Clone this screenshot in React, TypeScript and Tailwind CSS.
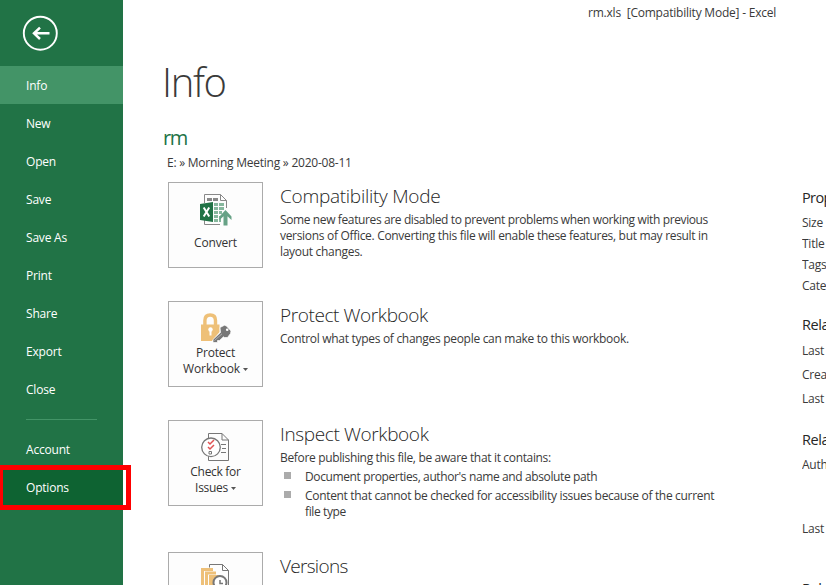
import type { ReactNode } from "react";

const navItems = ["Info", "New", "Open", "Save", "Save As", "Print", "Share", "Export", "Close"];

function NavItem({ label, className = "" }: { label: string; className?: string }) {
  return (
    <a className={`flex h-[38px] shrink-0 items-center pl-[26px] pt-px text-[12px] tracking-[-0.2px] text-white ${className}`}>
      {label}
    </a>
  );
}

function Sidebar() {
  return (
    <nav className="flex h-full w-[123px] shrink-0 flex-col bg-[#217346]">
      <div className="h-[66px] shrink-0 pl-[22px] pt-[15px]">
        <svg width="36" height="36" viewBox="0 0 36 36" fill="none" stroke="#fff">
          <circle cx="18.3" cy="18.200" r="16.5" strokeWidth="1.900" />
          <path d="M27.5 18.300H12M18 12.600L12 18.300L18 24" strokeWidth="2.500" />
        </svg>
      </div>
      {navItems.map((label) => (
        <NavItem key={label} label={label} className={label === "Info" ? "bg-[#439467]" : ""} />
      ))}
      <div className="ml-[26px] mt-[11px] mb-[10px] h-px w-[71px] shrink-0 bg-[#439467]" />
      <NavItem label="Account" className="tracking-[-0.1px]" />
      <NavItem label="Options" className="bg-[#0e6332]" />
    </nav>
  );
}

function Caret() {
  return (
    <svg className="ml-[3px] inline-block align-middle" width="5" height="3" viewBox="0 0 5 3">
      <path d="M0 0H5L2.5 3Z" fill="#555" />
    </svg>
  );
}

function ConvertIcon() {
  return (
    <svg width="33" height="32" viewBox="0 0 33 32" fill="none" className="ml-px">
      <path d="M4.5 9V.5H20.500L26.500 6.500V14M4.500 24V30.500H20" stroke="#888" />
      <path d="M20.500 .5V6.500H26.500" stroke="#888" />
      <path d="M7 4H12V7H7ZM13 4H18V7H13Z" fill="#888" />
      <path d="M14 9H18V12H14ZM19 9H24V12H19ZM14 13H18V16H14ZM19 13H24V16H19ZM14 17H18V20H14ZM19 17H22V20H19ZM14 21H18V24H14ZM14 25H18V28H14ZM19 22H21V28H19Z" fill="#86b79d" />
      <path d="M0 10L13 8V28L0 26Z" fill="#217346" />
      <path d="M3.700 13.500L9.200 22.500M9.200 13.500L3.700 22.500" stroke="#fff" strokeWidth="2" />
      <path d="M25.500 16L31.500 22.500V26L27.500 22.300V31.500H23.500V22.300L19.500 26V22.500Z" fill="#67a286" />
    </svg>
  );
}

function ProtectIcon() {
  return (
    <svg width="32" height="32" viewBox="0 0 32 32" fill="none">
      <path d="M4.900 13V7.500C4.900 4 7 2 10.200 2S15.500 4 15.500 7.500V13" stroke="#eec078" strokeWidth="3.400" />
      <path d="M1 11.500H19.500V19L12 28H1Z" fill="#eec078" />
      <circle cx="10.500" cy="16.500" r="2.200" fill="#fff" />
      <path d="M10.500 17V22.500" stroke="#fff" strokeWidth="2" />
      <path d="M20 14.500L24.500 12.200L26.500 13L31 18L30.500 20.500L27.500 24.500H24.500L23.500 23.800L19.500 27.500H17.500V29.500H13V26.500L20.500 19.500Z" fill="#777" stroke="#fff" strokeWidth=".7" />
      <circle cx="27.200" cy="16.800" r="1.300" fill="#fff" />
      <path d="M14.500 27.500L22 20.800" stroke="#ccc" strokeWidth=".7" />
    </svg>
  );
}

function InspectIcon() {
  return (
    <svg width="30" height="30" viewBox="0 0 30 30" fill="none">
      <path d="M7.500 6V1.500H21L27.500 8V28.500H7.500V24" stroke="#777" />
      <path d="M21 1.500V8H27.500M20 12.500H25M21 16.500H25M20 20.500H25" stroke="#777" />
      <circle cx="10" cy="15.300" r="9.300" fill="#fff" stroke="#777" strokeWidth="1.300" />
      <path d="M7 10L9 12L13 8M7 15L9 17L13 13" stroke="#e05252" strokeWidth="1.500" />
      <path d="M8 19.500H10.500V22H8Z" stroke="#777" />
    </svg>
  );
}

function VersionsIcon() {
  return (
    <svg width="30" height="32" viewBox="0 0 30 32" fill="none">
      <path d="M0 4H12V7H3V26H0Z" fill="#eec078" />
      <path d="M4 7.500H15V10.500H7V28H4Z" fill="#eec078" />
      <path d="M8 11H19V30H8Z" fill="#eec078" />
      <path d="M8.500 3.500V.5H21.500L27.500 6.500V27H22" stroke="#777" />
      <path d="M21.500 .5V6.500H27.500" stroke="#777" />
      <circle cx="19" cy="18.500" r="6.500" fill="#fff" stroke="#777" strokeWidth="2" />
      <path d="M19 16V19.500H22" stroke="#777" strokeWidth="1.500" />
    </svg>
  );
}

function TileButton({ icon, children }: { icon: ReactNode; children?: ReactNode }) {
  return (
    <button className="flex h-[86px] w-[95px] shrink-0 flex-col items-center border border-[#ababab] bg-[#fdfdfd] pt-[11px] text-[12px] leading-4 tracking-[-0.05px] text-[#333]">
      <span className="flex h-8 items-start">{icon}</span>
      {children}
    </button>
  );
}

function Section({ tile, title, titleClass, children, className }: { tile: ReactNode; title: string; titleClass: string; children?: ReactNode; className: string }) {
  return (
    <section className={`flex shrink-0 gap-[17px] ${className}`}>
      {tile}
      <div className="pt-px text-[12px] leading-4 whitespace-nowrap text-[#3a3a3a]">
        <h2 className={`h-[29px] text-[19px] leading-[26px] font-light text-[#262626] ${titleClass}`}>{title}</h2>
        {children}
      </div>
    </section>
  );
}

function Bullet({ children }: { children: ReactNode }) {
  return (
    <li className="flex gap-[14px] pl-1">
      <span className="mt-[3px] size-[7px] bg-[#ababab]" />
      <div>{children}</div>
    </li>
  );
}

function Properties() {
  return (
    <aside className="flex h-full w-6 shrink-0 flex-col overflow-hidden pt-[188px] text-[12px] leading-[21px] tracking-[-0.25px] whitespace-nowrap text-[#3a3a3a] *:shrink-0">
      <h3 className="h-6 text-[14.5px] leading-[19px] tracking-[-0.6px] text-[#262626]">Properties</h3>
      <p>Size</p>
      <p>Title</p>
      <p>Tags</p>
      <p>Categories</p>
      <h3 className="mt-[19px] h-[25px] text-[14.5px] leading-[19px] tracking-[-0.4px] text-[#262626]">Related Dates</h3>
      <p className="h-6">Last Modified</p>
      <p className="h-6">Created</p>
      <p className="h-6">Last Printed</p>
      <h3 className="mt-[18px] h-6 text-[14.5px] leading-[19px] tracking-[-0.4px] text-[#262626]">Related People</h3>
      <p className="h-16">Author</p>
      <p className="h-6">Last Modified By</p>
      <h3 className="mt-[37px] text-[14.5px] leading-[19px] tracking-[-0.4px] text-[#262626]">Related Documents</h3>
    </aside>
  );
}

export default function App() {
  return (
    <div className="relative flex h-[585px] w-[826px] overflow-hidden bg-white font-['Open_Sans','Noto_Sans',sans-serif]">
      <Sidebar />
      <main className="flex min-w-0 flex-1 flex-col pl-[40px]">
        <header className="h-[55px] shrink-0 pl-[425px] pt-[5px] text-[12px] leading-4 whitespace-pre text-[#3a3a3a]">
          <span className="tracking-[-0.22px]">{"rm.xls  [Compatibility Mode] - Excel"}</span>
        </header>
        <h1 className="-ml-px h-[70px] shrink-0 text-[40px] leading-[54px] font-light tracking-[-1.4px] text-[#3a3a3a]">Info</h1>
        <p className="h-[30px] shrink-0 text-[20px] leading-[26px] tracking-[-1.4px] text-[#217346]">rm</p>
        <p className="h-[27px] shrink-0 pl-1 text-[12px] leading-4 text-[#3a3a3a]">
          <span className="tracking-[-0.24px]">E: » Morning Meeting » 2020-08-11</span>
        </p>
        <div className="flex flex-col pl-[5px]">
          <Section
            className="h-[119px]"
            title="Compatibility Mode"
            titleClass="tracking-[-0.27px]"
            tile={<TileButton icon={<ConvertIcon />}><span className="mt-[9px] tracking-[-0.15px]">Convert</span></TileButton>}
          >
            <p className="tracking-[-0.38px]">Some new features are disabled to prevent problems when working with previous</p>
            <p className="tracking-[-0.31px]">versions of Office. Converting this file will enable these features, but may result in</p>
            <p className="tracking-[-0.3px]">layout changes.</p>
          </Section>
          <Section
            className="h-[119px]"
            title="Protect Workbook"
            titleClass="tracking-[-0.4px]"
            tile={<TileButton icon={<ProtectIcon />}><span className="tracking-[-0.2px]">Protect</span><span>Workbook<Caret /></span></TileButton>}
          >
            <p className="tracking-[-0.3px]">Control what types of changes people can make to this workbook.</p>
          </Section>
          <Section
            className="h-[132px]"
            title="Inspect Workbook"
            titleClass="tracking-[-0.37px]"
            tile={<TileButton icon={<InspectIcon />}><span className="tracking-[-0.3px]">Check for</span><span className="tracking-[-0.3px]">Issues<Caret /></span></TileButton>}
          >
            <p className="tracking-[-0.34px]">Before publishing this file, be aware that it contains:</p>
            <ul className="mt-[3px] flex flex-col gap-[3px] tracking-[-0.38px]">
              <Bullet><p>Document properties, author's name and absolute path</p></Bullet>
              <Bullet><p className="tracking-[-0.32px]">Content that cannot be checked for accessibility issues because of the current</p><p>file type</p></Bullet>
            </ul>
          </Section>
          <Section className="h-[119px]" title="Versions" titleClass="tracking-[-0.7px]" tile={<TileButton icon={<VersionsIcon />} />} />
        </div>
      </main>
      <Properties />
      <div className="absolute top-[465px] left-[-2px] h-[45px] w-[133px] border-5 border-[#fe0000]" />
    </div>
  );
}
